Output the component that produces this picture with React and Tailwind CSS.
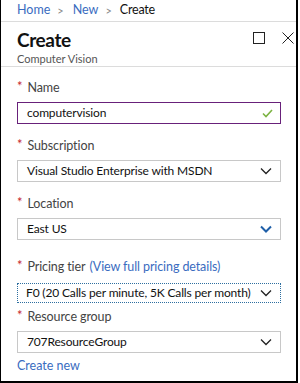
import React from "react";

const Chevron = ({ color = "#222", w = 1.3 }) => (
  <svg width="12" height="8" viewBox="0 0 12 8" fill="none">
    <path d="M1 1.5 L6 6.5 L11 1.5" stroke={color} strokeWidth={w} />
  </svg>
);

const Label = ({ children }) => (
  <div className="flex items-center h-[18px] text-[12.5px] text-[#444] tracking-[-0.1px]">
    <span className="text-[#c4262e] mr-[5px] text-[13px] leading-none relative top-[-2px]">*</span>
    <span>{children}</span>
  </div>
);

const Select = ({ value, chev }) => (
  <div className="mt-[5px] h-[22px] w-[264px] border border-[#c8c8c8] flex items-center justify-between pl-[9px] pr-[8px] text-[12px] tracking-[-0.15px] text-[#111]">
    <span className="whitespace-nowrap">{value}</span>
    {chev}
  </div>
);

export default function App() {
  return (
    <div
      className="w-[298px] h-[383px] bg-white border-l border-r-2 border-b-2 border-black box-border flex flex-col"
      style={{ fontFamily: 'Lato, "Open Sans", sans-serif' }}
    >
      <div className="h-[22px] border-b border-[#dcdcdc] flex items-center pl-[16px] text-[12.5px] leading-none">
        <span className="text-[#3a6cbf]">Home</span>
        <span className="text-[#888] ml-[7px] mr-[9px] text-[11px]">&gt;</span>
        <span className="text-[#3a6cbf]">New</span>
        <span className="text-[#888] ml-[7px] mr-[8px] text-[11px]">&gt;</span>
        <span className="text-[#111] tracking-[-0.2px]">Create</span>
      </div>
      <div className="h-[45px] border-b border-[#dcdcdc] flex justify-between pl-[16px] pr-[2px]">
        <div className="pt-[7px]">
          <div className="text-[19px] font-bold leading-[22px] tracking-[-0.4px] text-[#111]">Create</div>
          <div className="text-[11px] text-[#555] leading-[14px] mt-[1px]">Computer Vision</div>
        </div>
        <div className="flex items-start pt-[10px] gap-[17px]">
          <div className="w-[12px] h-[12px] border border-[#222]" />
          <svg width="12" height="12" viewBox="0 0 12 12">
            <path d="M0.5 0.5 L11.5 11.5 M11.5 0.5 L0.5 11.5" stroke="#222" strokeWidth="1" />
          </svg>
        </div>
      </div>
      <div className="pl-[16px] pt-[12px] flex flex-col">
        <Label>Name</Label>
        <div className="mt-[5px] h-[22px] w-[264px] border border-[#68217a] flex items-center justify-between pl-[9px] pr-[7px] text-[12px] tracking-[-0.15px] text-[#111]">
          <span>computervision</span>
          <svg width="11" height="9" viewBox="0 0 11 9" fill="none">
            <path d="M1 4.5 L4 7.5 L10 1" stroke="#7cb342" strokeWidth="1.6" />
          </svg>
        </div>
        <div className="mt-[13px]">
          <Label>Subscription</Label>
          <Select value="Visual Studio Enterprise with MSDN" chev={<Chevron />} />
        </div>
        <div className="mt-[13px]">
          <Label>Location</Label>
          <Select value="East US" chev={<Chevron color="#1f5fa8" w={2} />} />
        </div>
        <div className="mt-[18px]">
          <div className="flex items-center h-[18px] text-[12.5px] tracking-[-0.1px] text-[#444] whitespace-nowrap">
            <span className="text-[#c4262e] mr-[5px] text-[13px] leading-none relative top-[-2px]">*</span>
            <span>Pricing tier</span>
            <span className="text-[#3a6cbf] ml-[4px]">(View full pricing details)</span>
          </div>
          <div className="mt-[7px] h-[20px] w-[264px] border border-dotted border-[#2e6fa0] flex items-center justify-between pl-[8px] pr-[8px] text-[12px] tracking-[-0.15px] text-[#111]">
            <span className="whitespace-nowrap">F0 (20 Calls per minute, 5K Calls per month)</span>
            <Chevron />
          </div>
        </div>
        <div className="mt-[5px]">
          <Label>Resource group</Label>
          <Select value="707ResourceGroup" chev={<Chevron />} />
        </div>
        <div className="mt-[4px] text-[12.5px] text-[#3a6cbf] leading-[18px]">Create new</div>
      </div>
    </div>
  );
}
